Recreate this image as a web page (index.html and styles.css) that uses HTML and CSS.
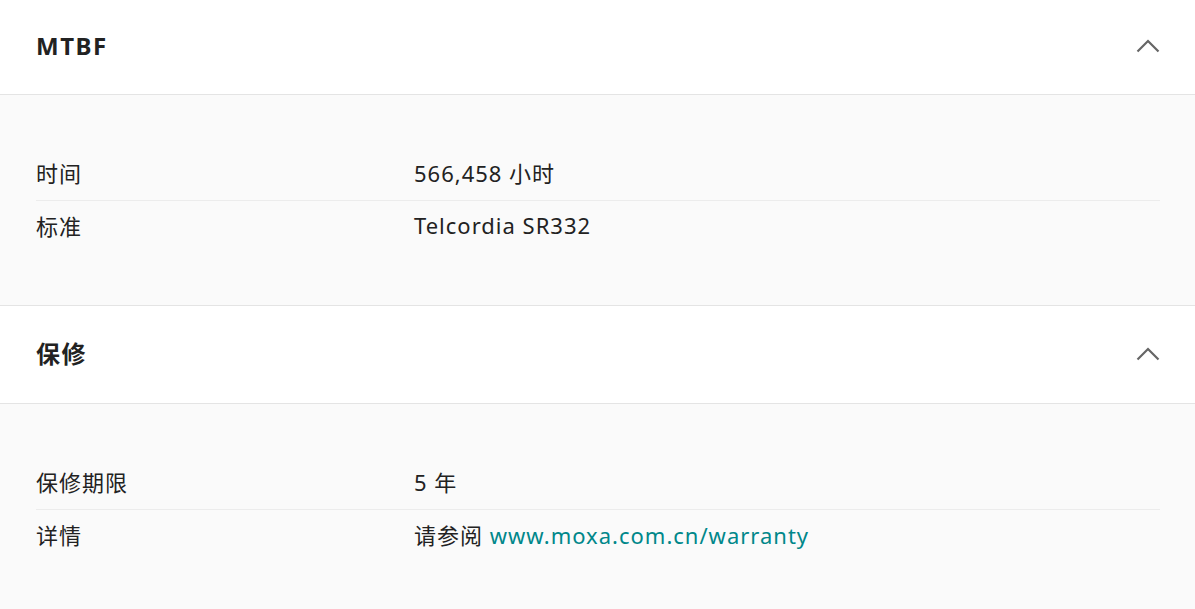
FILE: index.html
```html
<!DOCTYPE html>
<html lang="zh-CN">
<head>
<meta charset="utf-8">
<link rel="stylesheet" href="styles.css">
</head>
<body>
<section class="panel">
  <div class="panel-head">
    <h2 class="panel-title">MTBF</h2>
    <svg class="chev" width="24" height="14" viewBox="0 0 24 14"><path d="M1.5 12.5 L12 2 L22.5 12.5" fill="none" stroke="#666" stroke-width="2.2"/></svg>
  </div>
  <div class="panel-body">
    <div class="row"><div class="label">时间</div><div class="value">566,458 小时</div></div>
    <div class="row"><div class="label">标准</div><div class="value">Telcordia SR332</div></div>
  </div>
</section>
<section class="panel">
  <div class="panel-head">
    <h2 class="panel-title">保修</h2>
    <svg class="chev" width="24" height="14" viewBox="0 0 24 14"><path d="M1.5 12.5 L12 2 L22.5 12.5" fill="none" stroke="#666" stroke-width="2.2"/></svg>
  </div>
  <div class="panel-body">
    <div class="row"><div class="label">保修期限</div><div class="value">5 年</div></div>
    <div class="row"><div class="label">详情</div><div class="value">请参阅 <a class="link" href="#">www.moxa.com.cn/warranty</a></div></div>
  </div>
</section>
</body>
</html>
```
FILE: styles.css
```css
html, body {
  margin: 0;
  padding: 0;
  background: #fafafa;
  font-family: "Noto Sans", "Noto Sans CJK SC", sans-serif;
  color: #222;
}
.panel {
  border-bottom: 1px solid #e4e4e4;
}
.panel-head {
  height: 95px;
  background: #fff;
  border-bottom: 1px solid #e4e4e4;
  display: flex;
  align-items: center;
  justify-content: space-between;
  padding: 0 35px 0 36px;
  box-sizing: border-box;
}
.panel + .panel .panel-head {
  height: 98px;
}
.panel-title {
  margin: -4px 0 0;
  font-size: 24px;
  font-weight: 700;
  color: #222;
  letter-spacing: 1.5px;
}
.chev {
  display: block;
  margin-top: -2px;
}
.panel-body {
  padding: 53px 35px 52px 36px;
  background: #fafafa;
}
.row {
  display: grid;
  grid-template-columns: 378px 1fr;
  height: 52px;
  box-sizing: border-box;
  padding-bottom: 4px;
  align-items: center;
  font-size: 22px;
  letter-spacing: 1px;
}
.row + .row {
  height: 53px;
  border-top: 1px solid #ececec;
}
.label, .value {
  color: #222;
}
.link {
  color: #00878a;
  text-decoration: none;
}
```
